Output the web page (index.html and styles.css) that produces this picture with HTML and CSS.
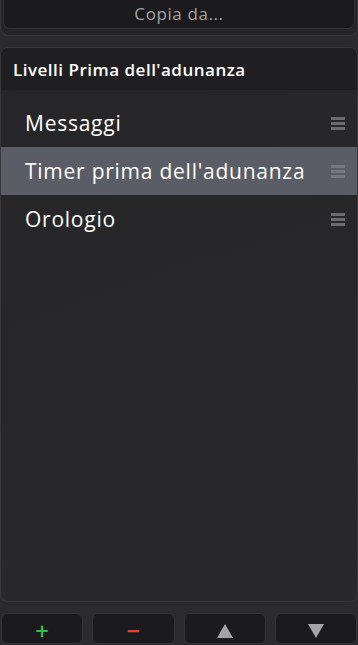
FILE: index.html
```html
<!DOCTYPE html>
<html lang="it">
<head>
    <meta charset="UTF-8">
    <meta name="viewport" content="width=device-width, initial-scale=1.0">
    <title>Livelli Prima dell'adunanza</title>
    <link rel="stylesheet" href="styles.css">
</head>
<body>

<div class="app">
    <!-- Copia da -->
    <div class="copy-panel">
        <button class="copy-btn">Copia da...</button>
    </div>

    <!-- Livelli -->
    <div class="layers-panel">
        <div class="layers-header">Livelli Prima dell'adunanza</div>
        <ul class="layers-list">
            <li class="layer">
                <span>Messaggi</span>
                <span class="handle"><i></i><i></i><i></i></span>
            </li>
            <li class="layer selected">
                <span>Timer prima dell'adunanza</span>
                <span class="handle"><i></i><i></i><i></i></span>
            </li>
            <li class="layer">
                <span>Orologio</span>
                <span class="handle"><i></i><i></i><i></i></span>
            </li>
        </ul>
    </div>

    <!-- Pulsanti -->
    <div class="toolbar">
        <button class="tool-btn add">+</button>
        <button class="tool-btn remove">&minus;</button>
        <button class="tool-btn"><span class="arrow up"></span></button>
        <button class="tool-btn"><span class="arrow down"></span></button>
    </div>
</div>

</body>
</html>
```

FILE: styles.css
```css
* {
    box-sizing: border-box;
    margin: 0;
    padding: 0;
}

body {
    background-color: #2b2b2e;
    color: #fff;
    font-family: "Open Sans", "Noto Sans", sans-serif;
    width: 358px;
    height: 645px;
    overflow: hidden;
}

.app {
    display: flex;
    flex-direction: column;
    height: 645px;
}

.copy-panel {
    margin-top: -10px;
    height: 46px;
    border: 1px solid #38383b;
    border-top: none;
    border-radius: 0 0 8px 8px;
    background: #252528;
    padding: 0 2px;
}

.copy-btn {
    display: block;
    width: 100%;
    height: 39px;
    padding-top: 9px;
    background: #1b1b1e;
    border: 1px solid #333336;
    border-top: none;
    border-radius: 0 0 7px 7px;
    color: #a2a2a5;
    font-family: inherit;
    font-size: 17px;
    letter-spacing: 0.6px;
}

.layers-panel {
    margin-top: 11px;
    height: 555px;
    border: 1px solid #38383b;
    border-radius: 8px;
    background: linear-gradient(160deg, #262629, #29292c);
    overflow: hidden;
}

.layers-header {
    height: 42px;
    padding: 10px 12px 0;
    background: #1f1f22;
    font-size: 17px;
    font-weight: 600;
    letter-spacing: 0.5px;
    color: #fff;
}

.layers-list {
    list-style: none;
    margin-top: 9px;
}

.layer {
    display: flex;
    align-items: center;
    justify-content: space-between;
    height: 48px;
    padding: 0 12px 0 24px;
    font-size: 21px;
    letter-spacing: 0.75px;
    color: #fff;
}

.layer.selected {
    background: #5a5d66;
}

.handle {
    display: flex;
    flex-direction: column;
    gap: 2px;
    width: 14px;
}

.handle i {
    display: block;
    height: 3px;
    background: #6c6c70;
}

.selected .handle i {
    background: #75787f;
}

.toolbar {
    display: flex;
    gap: 9px;
    margin-top: 11px;
    padding: 0 1px;
}

.tool-btn {
    flex: 1;
    height: 31px;
    background: #1b1b1e;
    border: 1px solid #343437;
    border-radius: 6px;
    display: flex;
    align-items: center;
    justify-content: center;
    padding-top: 4px;
    font-family: "DejaVu Sans", sans-serif;
    font-size: 18px;
    font-weight: bold;
}

.tool-btn.add {
    color: #2fbf4f;
}

.tool-btn.remove {
    color: #e5403a;
}

.arrow {
    width: 0;
    height: 0;
    border-left: 8px solid transparent;
    border-right: 8px solid transparent;
}

.arrow.up {
    border-bottom: 14px solid #a3a3a8;
}

.arrow.down {
    border-top: 14px solid #a3a3a8;
}
```
